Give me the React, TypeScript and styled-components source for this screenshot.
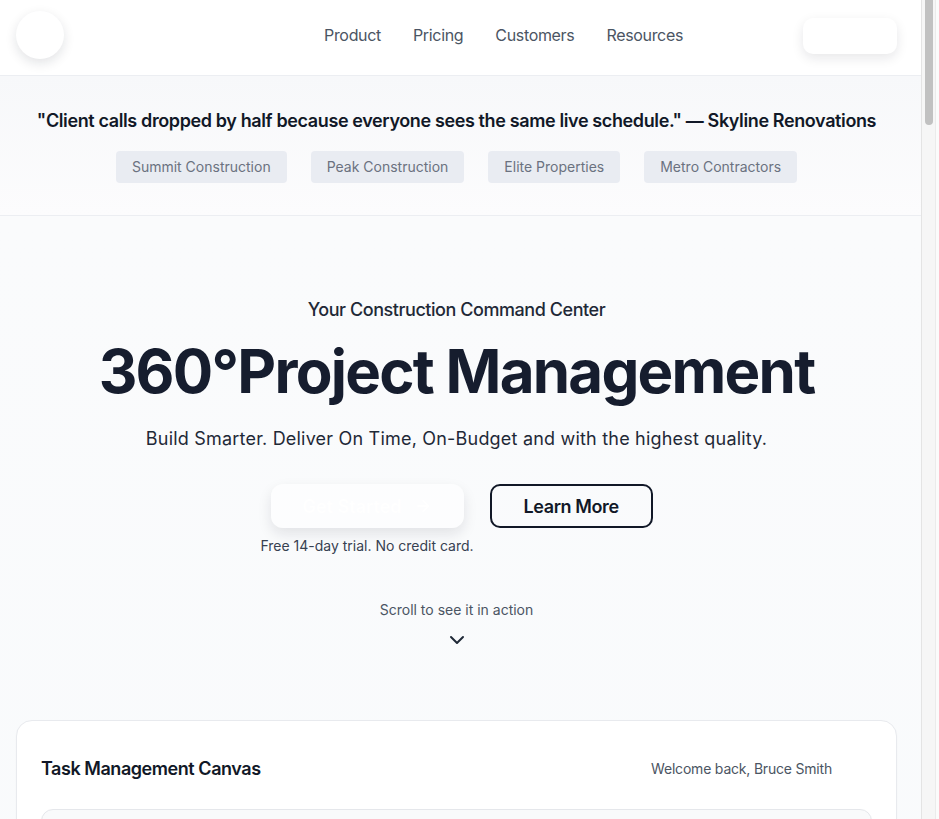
import React from "react";
import styled, { createGlobalStyle } from "styled-components";
import { ChevronDown, ArrowRight } from "lucide-react";

const GlobalStyle = createGlobalStyle`
  * { box-sizing: border-box; }
  html, body { margin: 0; padding: 0; }
  body {
    font-family: Inter, "Noto Sans", sans-serif;
    background: #f8fafc;
    color: #111827;
    -webkit-font-smoothing: antialiased;
  }
`;

const Page = styled.div`
  min-height: 100vh;
  background: #f9fafc;
  padding-right: 18px;
`;

const ScrollTrack = styled.div`
  position: fixed;
  top: 0;
  right: 0;
  bottom: 0;
  width: 18px;
  background: #f6f6f6;
  border-left: 1px solid #e4e4e4;
  box-shadow: inset -3px 0 0 #fbfbfb, inset -4px 0 0 #ebebeb;
  z-index: 10;
`;

const ScrollThumb = styled.div`
  margin-left: 3px;
  width: 8px;
  height: 125px;
  background: #c1c1c1;
  border-radius: 0 0 4px 4px;
`;

const Header = styled.header`
  background: #ffffff;
  border-bottom: 1px solid #eceef2;
  box-shadow: 0 1px 3px rgba(15, 23, 42, 0.04);
  padding: 11px 24px 16px 16px;
`;

const HeaderInner = styled.div`
  display: flex;
  align-items: center;
  height: 48px;
`;

const Logo = styled.div`
  flex: 1;
  display: flex;
  align-items: center;
`;

const LogoMark = styled.div`
  width: 48px;
  height: 48px;
  border-radius: 50%;
  background: #ffffff;
  box-shadow: 0 4px 12px rgba(15, 23, 42, 0.12);
`;

const Nav = styled.nav`
  display: flex;
  gap: 32px;
`;

const NavLink = styled.a`
  font-size: 16px;
  line-height: 24px;
  letter-spacing: -0.33px;
  color: #4b5563;
  text-decoration: none;
`;

const HeaderButton = styled.button`
  margin-left: 120px;
  margin-top: 2px;
  width: 94px;
  height: 36px;
  border: none;
  border-radius: 10px;
  background: #ffffff;
  color: #ffffff;
  box-shadow: 0 4px 12px rgba(15, 23, 42, 0.1);
  font-family: inherit;
  font-size: 14px;
  font-weight: 600;
`;

const Testimonials = styled.section`
  background: linear-gradient(180deg, #f7f8fa 0%, #fcfcfd 100%);
  border-bottom: 1px solid #eceef2;
  padding: 31px 24px 32px 16px;
  display: flex;
  flex-direction: column;
  align-items: center;
`;

const Quote = styled.p`
  margin: 0;
  font-size: 18px;
  line-height: 28px;
  font-weight: 600;
  letter-spacing: -0.38px;
  color: #111827;
  text-align: center;
`;

const ChipRow = styled.div`
  margin-top: 16px;
  display: flex;
  gap: 24px;
  justify-content: center;
  flex-wrap: wrap;
`;

const Chip = styled.span`
  display: inline-block;
  padding: 6px 16px;
  font-size: 14px;
  line-height: 20px;
  color: #6b7280;
  background: #e9ecf2;
  border-radius: 4px;
`;

const Hero = styled.section`
  padding: 80px 24px 0 16px;
  background: linear-gradient(180deg, #fafbfc 0%, #f8fafc 100%);
  display: flex;
  flex-direction: column;
  align-items: center;
  text-align: center;
`;

const Eyebrow = styled.p`
  margin: 0;
  font-size: 18px;
  line-height: 28px;
  font-weight: 500;
  letter-spacing: -0.44px;
  color: #1f2937;
`;

const Title = styled.h1`
  margin: 14px 0 0;
  font-size: 60px;
  line-height: 66px;
  font-weight: 700;
  letter-spacing: -1.75px;
  color: #161d2e;
`;

const Subtitle = styled.p`
  margin: 21px 0 0;
  font-size: 18px;
  line-height: 28px;
  letter-spacing: 0.2px;
  color: #1f2937;
`;

const Actions = styled.div`
  margin-top: 31px;
  display: flex;
  gap: 16px;
  align-items: flex-start;
`;

const CtaColumn = styled.div`
  display: flex;
  flex-direction: column;
  align-items: center;
  gap: 8px;
`;

const PrimaryButton = styled.button`
  display: inline-flex;
  align-items: center;
  justify-content: center;
  gap: 12px;
  width: 193px;
  height: 44px;
  border: none;
  border-radius: 12px;
  background: rgba(255, 255, 255, 0.5);
  color: #ffffff;
  box-shadow: 0 6px 14px rgba(15, 23, 42, 0.1);
  font-family: inherit;
  font-size: 18px;
  font-weight: 600;
`;

const SecondaryButton = styled.button`
  width: 163px;
  height: 44px;
  border: 2px solid #111827;
  border-radius: 10px;
  background: transparent;
  color: #111827;
  font-family: inherit;
  font-size: 18px;
  font-weight: 600;
  letter-spacing: -0.4px;
`;

const Note = styled.span`
  font-size: 14px;
  line-height: 20px;
  color: #374151;
`;

const ScrollHint = styled.p`
  margin: 44px 0 0;
  font-size: 14px;
  line-height: 20px;
  color: #4b5563;
`;

const ChevronWrap = styled.div`
  margin-top: 8px;
  display: flex;
  color: #1f2937;
`;

const CardArea = styled.div`
  align-self: stretch;
  padding-top: 68px;
  padding-bottom: 48px;
`;

const Card = styled.div`
  background: #ffffff;
  border: 1px solid #e8eaee;
  border-radius: 16px;
  padding: 24px;
  box-shadow: 0 1px 2px rgba(15, 23, 42, 0.03);
  text-align: left;
`;

const CardHeader = styled.div`
  display: flex;
  align-items: center;
  justify-content: space-between;
  height: 48px;
`;

const CardTitle = styled.h2`
  margin: 0;
  font-size: 18px;
  line-height: 28px;
  font-weight: 600;
  letter-spacing: -0.45px;
  color: #111827;
`;

const UserInfo = styled.div`
  display: flex;
  align-items: center;
  gap: 8px;
`;

const Welcome = styled.span`
  font-size: 14px;
  line-height: 20px;
  letter-spacing: -0.2px;
  color: #4b5563;
`;

const Avatar = styled.div`
  width: 32px;
  height: 32px;
  border-radius: 50%;
  background: #ffffff;
`;

const Canvas = styled.div`
  margin-top: 16px;
  height: 600px;
  background: #f9fafb;
  border: 1px solid #e5e7eb;
  border-radius: 12px;
`;

const chips = ["Summit Construction", "Peak Construction", "Elite Properties", "Metro Contractors"];
const links = ["Product", "Pricing", "Customers", "Resources"];

export default function App() {
  return (
    <>
      <GlobalStyle />
      <Page>
        <Header>
          <HeaderInner>
            <Logo>
              <LogoMark />
            </Logo>
            <Nav>
              {links.map((l) => (
                <NavLink key={l} href="#">
                  {l}
                </NavLink>
              ))}
            </Nav>
            <HeaderButton>Sign In</HeaderButton>
          </HeaderInner>
        </Header>
        <Testimonials>
          <Quote>
            "Client calls dropped by half because everyone sees the same live schedule." — Skyline Renovations
          </Quote>
          <ChipRow>
            {chips.map((c) => (
              <Chip key={c}>{c}</Chip>
            ))}
          </ChipRow>
        </Testimonials>
        <Hero>
          <Eyebrow>Your Construction Command Center</Eyebrow>
          <Title>360°Project Management</Title>
          <Subtitle>Build Smarter. Deliver On Time, On-Budget and with the highest quality.</Subtitle>
          <Actions>
            <CtaColumn>
              <PrimaryButton>
                Get Started <ArrowRight size={18} strokeWidth={2} />
              </PrimaryButton>
              <Note>Free 14-day trial. No credit card.</Note>
            </CtaColumn>
            <SecondaryButton>Learn More</SecondaryButton>
          </Actions>
          <ScrollHint>Scroll to see it in action</ScrollHint>
          <ChevronWrap>
            <ChevronDown size={24} strokeWidth={2} />
          </ChevronWrap>
          <CardArea>
            <Card>
              <CardHeader>
                <CardTitle>Task Management Canvas</CardTitle>
                <UserInfo>
                  <Welcome>Welcome back, Bruce Smith</Welcome>
                  <Avatar />
                </UserInfo>
              </CardHeader>
              <Canvas />
            </Card>
          </CardArea>
        </Hero>
      </Page>
      <ScrollTrack aria-hidden>
        <ScrollThumb />
      </ScrollTrack>
    </>
  );
}
